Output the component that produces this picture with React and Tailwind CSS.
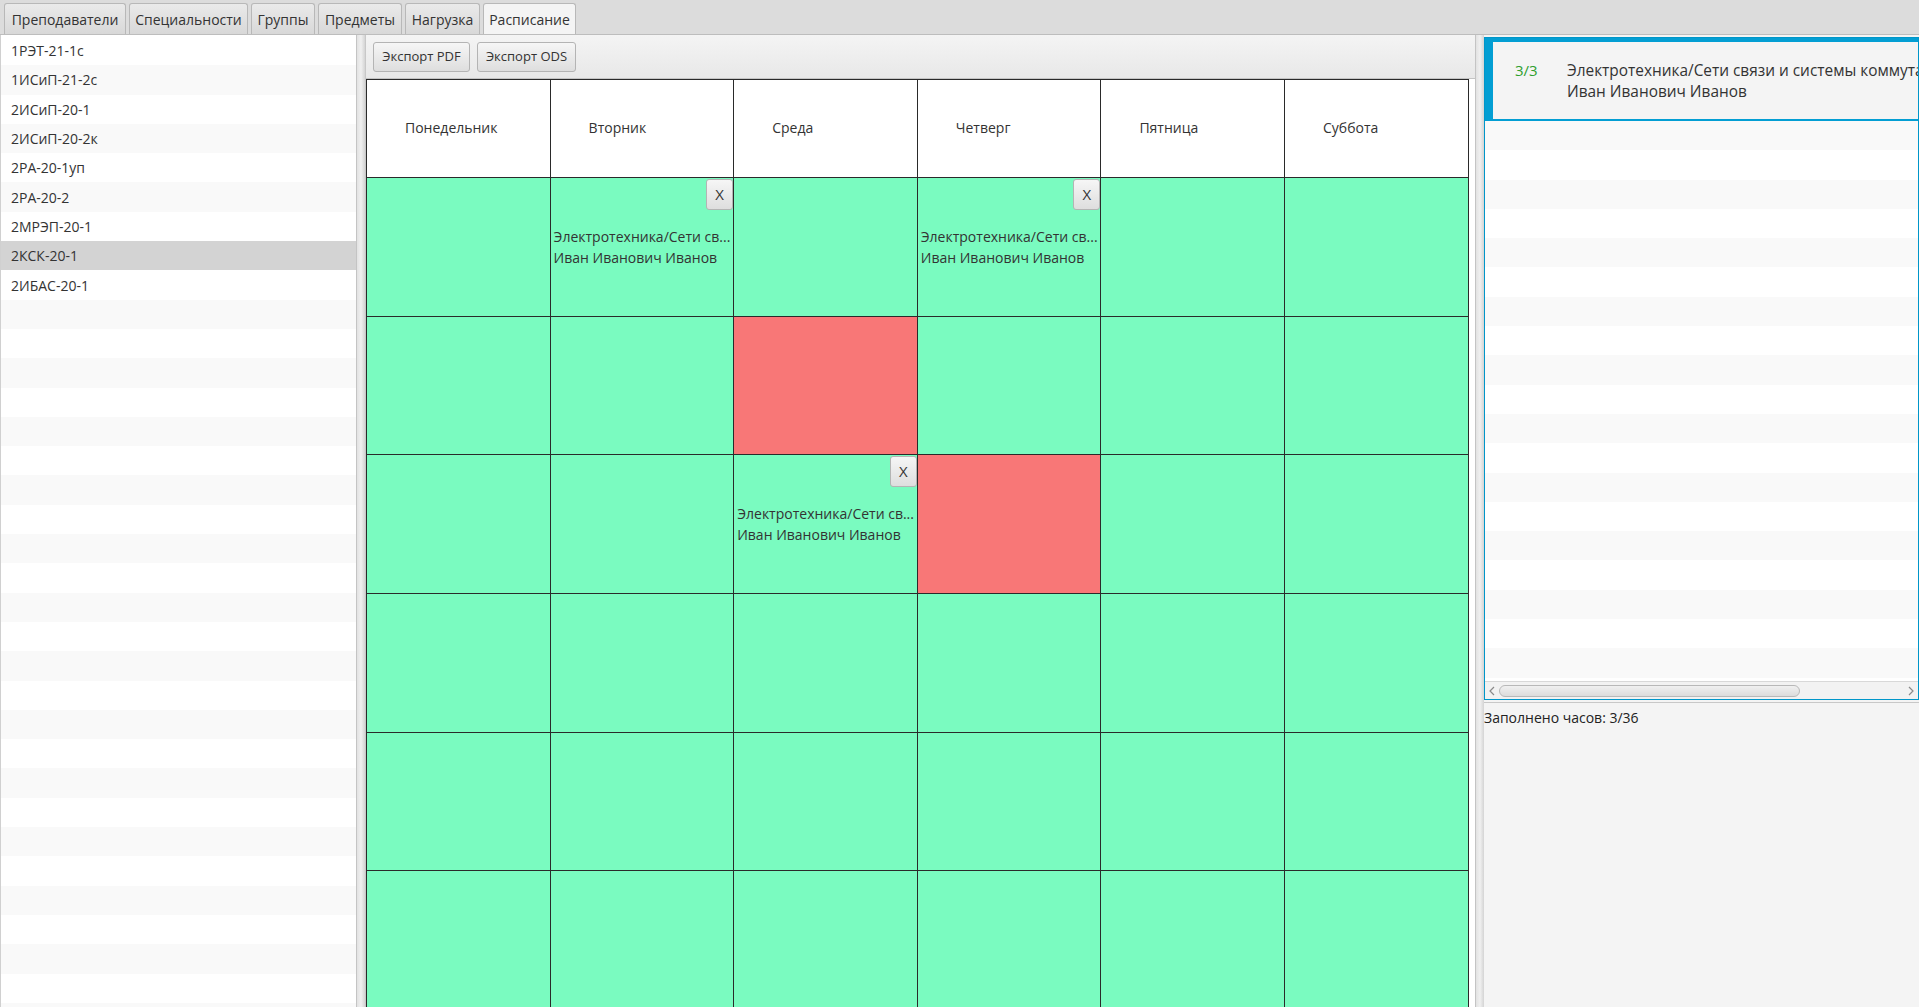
import React from "react";

const groups = [
  "1РЭТ-21-1с",
  "1ИСиП-21-2с",
  "2ИСиП-20-1",
  "2ИСиП-20-2к",
  "2РА-20-1уп",
  "2РА-20-2",
  "2МРЭП-20-1",
  "2КСК-20-1",
  "2ИБАС-20-1",
];

const tabs = [
  { label: "Преподаватели", cls: "w-[122px]" },
  { label: "Специальности", cls: "w-[119px]" },
  { label: "Группы", cls: "w-[64px]" },
  { label: "Предметы", cls: "w-[84px]" },
  { label: "Нагрузка", cls: "w-[75px]" },
  { label: "Расписание", cls: "w-[93px]", active: true },
];

const days = ["Понедельник", "Вторник", "Среда", "Четверг", "Пятница", "Суббота"];

const grid = [
  ["g", "c", "g", "c", "g", "g"],
  ["g", "g", "r", "g", "g", "g"],
  ["g", "g", "c", "r", "g", "g"],
  ["g", "g", "g", "g", "g", "g"],
  ["g", "g", "g", "g", "g", "g"],
  ["g", "g", "g", "g", "g", "g"],
];

function Cell({ t }) {
  if (t === "r") {
    return <div className="bg-[#f87777] border-r border-b border-[#2a2a2a]" />;
  }
  if (t === "c") {
    return (
      <div className="relative bg-[#7afbc0] border-r border-b border-[#2a2a2a] flex flex-col justify-center pl-[3px] overflow-hidden">
        <button className="absolute top-[1px] right-0 w-[27px] h-[31px] rounded-[3px] border border-[#b4b4b4] bg-gradient-to-b from-[#f6f6f6] to-[#dedede] text-[15px] text-[#333333] leading-none flex items-center justify-center">
          X
        </button>
        <div className="text-[14px] leading-[21px] text-[#333333] whitespace-nowrap">
          Электротехника/Сети св...
        </div>
        <div className="text-[14px] leading-[21px] text-[#333333] whitespace-nowrap">
          Иван Иванович Иванов
        </div>
      </div>
    );
  }
  return <div className="bg-[#7afbc0] border-r border-b border-[#2a2a2a]" />;
}

export default function App() {
  const leftRows = Array.from({ length: 34 });
  const rightRows = Array.from({ length: 20 });
  return (
    <div className="w-[1919px] h-[1007px] overflow-hidden bg-[#f4f4f4] font-['Open_Sans',sans-serif] text-[#333333] flex flex-col">
      {/* Tab bar */}
      <div className="h-[35px] shrink-0 bg-[#dcdcdc] border-b border-[#bdbdbd] flex items-start pt-[3px] pl-[4px] gap-[3px]">
        {tabs.map((t) => (
          <div
            key={t.label}
            className={
              "h-[31px] rounded-t-[3px] border border-b-0 border-[#b8b8b8] flex items-center justify-center text-[14px] whitespace-nowrap " +
              t.cls +
              (t.active
                ? " bg-[#f4f4f4]"
                : " bg-gradient-to-b from-[#eaeaea] to-[#d8d8d8]")
            }
          >
            {t.label}
          </div>
        ))}
      </div>

      {/* Body */}
      <div className="flex flex-1 min-h-0">
        {/* Left list */}
        <div className="w-[356px] shrink-0 bg-white border-l border-[#d0d0d0] overflow-hidden pt-[1px]">
          {leftRows.map((_, i) => {
            const selected = i === 7;
            const bg = selected ? "bg-[#d3d3d3]" : i % 2 === 1 ? "bg-[#f9f9f9]" : "bg-white";
            return (
              <div
                key={i}
                className={"h-[29.3px] flex items-center pl-[10px] text-[14px] whitespace-nowrap " + bg}
              >
                {groups[i] || ""}
              </div>
            );
          })}
        </div>

        {/* Splitter */}
        <div className="w-[9px] shrink-0 border-l border-[#c4c4c4] bg-gradient-to-r from-[#e2e2e2] via-[#f0f0f0] to-[#d4d4d4]" />

        {/* Center panel */}
        <div className="w-[1110px] shrink-0 flex flex-col min-h-0 bg-white border-l border-[#c8c8c8]">
          <div className="h-[44px] shrink-0 bg-gradient-to-b from-[#f4f4f4] to-[#e8e8e8] border-b border-[#c4c4c4] flex items-start pt-[7px] pl-[7px] gap-[7px]">
            <button className="w-[97px] h-[30px] rounded-[3px] border border-[#b4b4b4] bg-gradient-to-b from-[#f6f6f6] to-[#dedede] text-[13px] text-[#333333] flex items-center justify-center whitespace-nowrap">
              Экспорт PDF
            </button>
            <button className="w-[99px] h-[30px] rounded-[3px] border border-[#b4b4b4] bg-gradient-to-b from-[#f6f6f6] to-[#dedede] text-[13px] text-[#333333] flex items-center justify-center whitespace-nowrap">
              Экспорт ODS
            </button>
          </div>
          <div className="flex-1 min-h-0 overflow-hidden bg-white">
            <div className="w-[1103px] grid grid-cols-[repeat(6,183.6px)] grid-rows-[98px_repeat(6,138.7px)] border-t border-l border-[#2a2a2a]">
              {days.map((d) => (
                <div
                  key={d}
                  className="bg-white border-r border-b border-[#2a2a2a] flex items-center pl-[38px] pb-[2px] text-[14px] whitespace-nowrap"
                >
                  {d}
                </div>
              ))}
              {grid.map((row, ri) =>
                row.map((t, ci) => <Cell key={ri + "-" + ci} t={t} />)
              )}
            </div>
          </div>
        </div>

        {/* Splitter */}
        <div className="w-[9px] shrink-0 border-l border-[#c4c4c4] bg-gradient-to-r from-[#e2e2e2] via-[#f0f0f0] to-[#d4d4d4]" />

        {/* Right panel */}
        <div className="w-[435px] shrink-0 flex flex-col pt-[2px] bg-[#f4f4f4]">
          <div className="h-[663px] shrink-0 border border-[#0096c9] bg-white flex flex-col overflow-hidden">
            <div className="flex-1 min-h-0 overflow-hidden">
              <div className="w-[640px] h-[83px] bg-[#f4f4f4] border-t-[4px] border-l-[8px] border-b-[2px] border-[#039ed3] flex items-start pt-[18px]">
                <div className="w-[74px] shrink-0 pl-[22px] text-[15px] leading-[21px] text-[#2f9f2f]">3/3</div>
                <div className="text-[15.4px] leading-[21px] text-[#333333] whitespace-nowrap">
                  <div>Электротехника/Сети связи и системы коммутации</div>
                  <div>Иван Иванович Иванов</div>
                </div>
              </div>
              {rightRows.map((_, i) => (
                <div
                  key={i}
                  className={"h-[29.3px] " + (i % 2 === 0 ? "bg-[#f9f9f9]" : "bg-white")}
                />
              ))}
            </div>
            <div className="h-[18px] shrink-0 bg-[#f2f2f2] border-t border-[#d8d8d8] flex items-center px-[3px]">
              <svg width="8" height="10" viewBox="0 0 8 10" className="shrink-0">
                <path d="M6 1 L2 5 L6 9" fill="none" stroke="#8a8a8a" strokeWidth="1.2" />
              </svg>
              <div className="ml-[3px] w-[301px] h-[12px] rounded-[6px] border border-[#b8b8b8] bg-gradient-to-b from-[#f0f0f0] to-[#dcdcdc]" />
              <div className="flex-1" />
              <svg width="8" height="10" viewBox="0 0 8 10" className="shrink-0">
                <path d="M2 1 L6 5 L2 9" fill="none" stroke="#8a8a8a" strokeWidth="1.2" />
              </svg>
            </div>
          </div>
          <div className="mt-[2px] border-t border-[#c8c8c8] pt-[5px] text-[14px] leading-[20px] text-[#222222] whitespace-nowrap">
            Заполнено часов: 3/36
          </div>
        </div>
      </div>
    </div>
  );
}
